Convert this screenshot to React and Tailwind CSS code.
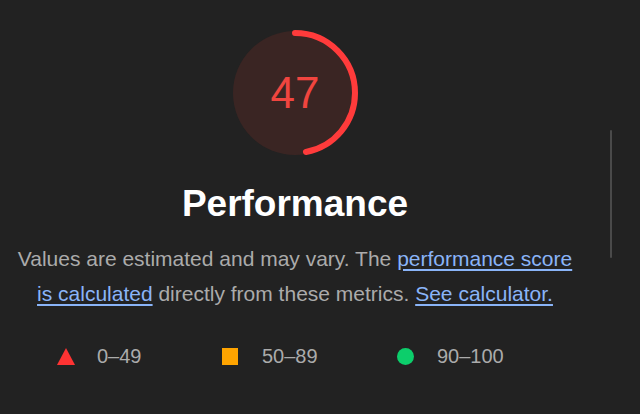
import React from "react";

const Gauge = ({ score }) => {
  const r = 60;
  const circ = 2 * Math.PI * r;
  return (
    <div className="relative w-[132px] h-[132px]">
      <svg width="132" height="132" viewBox="0 0 132 132">
        <circle cx="66" cy="66" r="62" fill="#3a2523" />
        <circle
          cx="66"
          cy="66"
          r={r}
          fill="none"
          stroke="#ff3b3b"
          strokeWidth="6"
          strokeLinecap="round"
          strokeDasharray={`${(circ * score) / 100} ${circ}`}
          transform="rotate(-90 66 66)"
        />
      </svg>
      <div className="absolute inset-0 flex items-center justify-center text-[44px] text-[#f0453f]">
        {score}
      </div>
    </div>
  );
};

const App = () => {
  return (
    <div
      className="relative w-[640px] h-[414px] bg-[#222222] overflow-hidden"
      style={{ fontFamily: '"Liberation Sans", Arial, sans-serif' }}
    >
      <div className="w-[590px] flex flex-col items-center pt-[27px]">
        <Gauge score={47} />
        {/* title */}
        <h1 className="mt-[23px] text-[37px] leading-[44px] font-semibold text-white">
          Performance
        </h1>
        <p className="mt-[15px] w-[566px] text-center text-[21px] leading-[35px] text-[#ababab]">
          Values are estimated and may vary. The{" "}
          <a className="text-[#8ab4f8] underline underline-offset-[3px]">
            performance score is calculated
          </a>{" "}
          directly from these metrics.{" "}
          <a className="text-[#8ab4f8] underline underline-offset-[3px]">
            See calculator.
          </a>
        </p>
      </div>

      {/* legend */}
      <div className="flex items-center mt-[30px] pl-[57px] text-[20px] text-[#ababab]">
        <div className="w-[165px] flex items-center gap-[22px]">
          <svg width="18" height="17" viewBox="0 0 18 17">
            <polygon points="9,0 18,17 0,17" fill="#ff3333" />
          </svg>
          <span>0–49</span>
        </div>
        <div className="w-[175px] flex items-center gap-[24px]">
          <div className="w-[16px] h-[17px] bg-[#ffa400]" />
          <span>50–89</span>
        </div>
        <div className="flex items-center gap-[23px]">
          <div className="w-[17px] h-[17px] rounded-full bg-[#0cce6b]" />
          <span>90–100</span>
        </div>
      </div>

      {/* scrollbar */}
      <div className="absolute left-[610px] top-[130px] w-[2px] h-[128px] rounded-full bg-[#4a4a4a]" />
    </div>
  );
};

export default App;
